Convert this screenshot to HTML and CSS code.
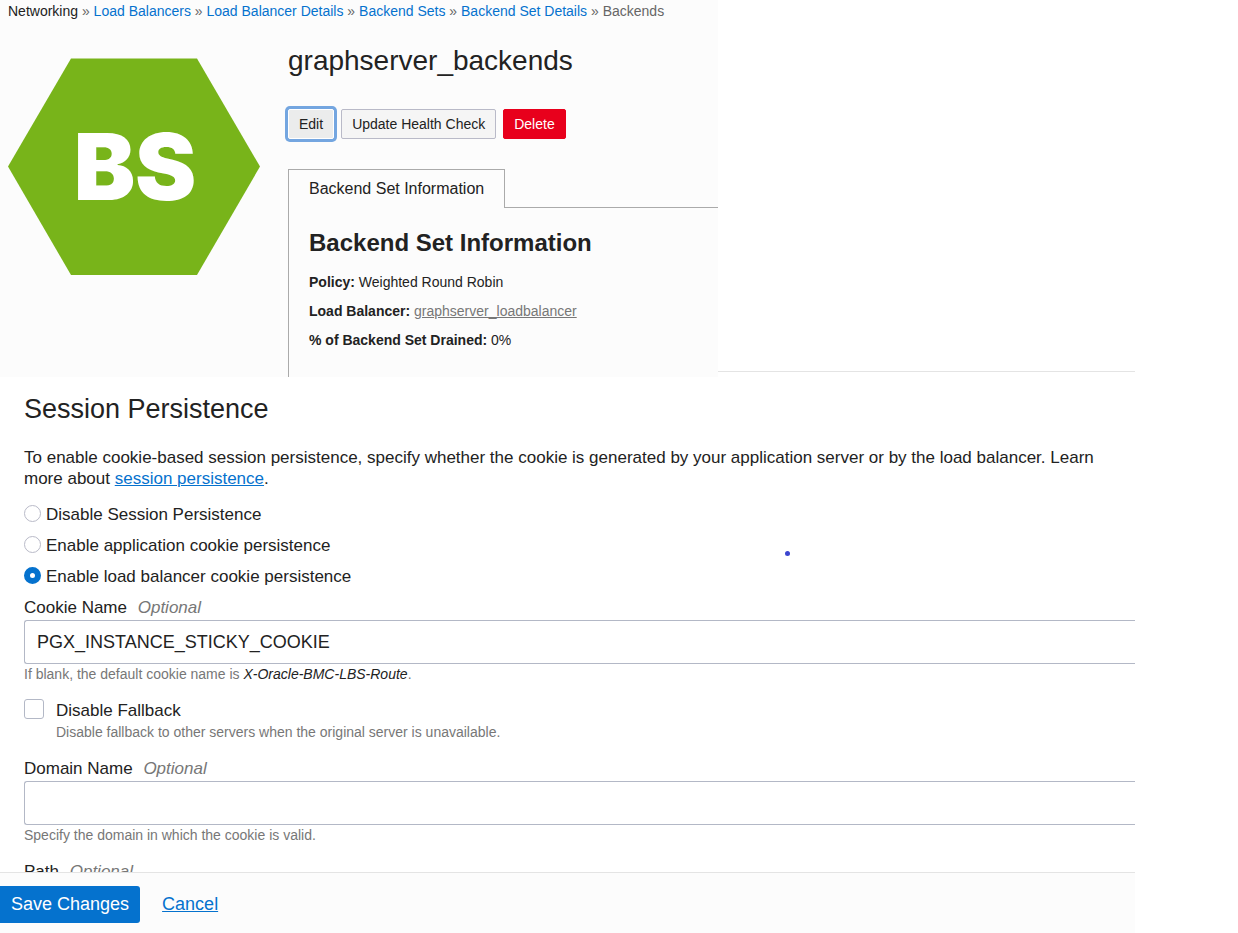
FILE: index.html
```
<!DOCTYPE html>
<html lang="en">
<head>
  <meta charset="utf-8">
  <title>Backend Set Details</title>
  <link rel="stylesheet" href="styles.css">
</head>
<body>
  <div class="page">
    <div class="top">
      <section class="details">
        <nav class="breadcrumb">
          <span class="current">Networking</span> »
          <a href="#">Load Balancers</a> »
          <a href="#">Load Balancer Details</a> »
          <a href="#">Backend Sets</a> »
          <a href="#">Backend Set Details</a> »
          Backends
        </nav>
        <div class="resource">
          <svg class="resource-icon" viewBox="0 0 252 217" width="252" height="217">
            <polygon points="0,108.5 63,0.5 189,0.5 252,108.5 189,217 63,217" fill="#78b41a"/>
            <text x="127" y="142" text-anchor="middle">BS</text>
          </svg>
          <div class="resource-body">
            <h1>graphserver_backends</h1>
            <div class="actions">
              <button type="button" class="btn btn-focus">Edit</button>
              <button type="button" class="btn">Update Health Check</button>
              <button type="button" class="btn btn-danger">Delete</button>
            </div>
            <div class="tabs">
              <button type="button" class="tab">Backend Set Information</button>
              <div class="tab-line"></div>
            </div>
            <div class="tab-panel">
              <h2>Backend Set Information</h2>
              <p><b>Policy:</b> Weighted Round Robin</p>
              <p><b>Load Balancer:</b> <a href="#">graphserver_loadbalancer</a></p>
              <p><b>% of Backend Set Drained:</b> 0%</p>
            </div>
          </div>
        </div>
      </section>
      <div class="divider"></div>
    </div>

    <form class="session">
      <div class="session-fields">
        <h1>Session Persistence</h1>
        <p class="intro">To enable cookie-based session persistence, specify whether the cookie is generated by your application server or by the load balancer. Learn more about <a href="#">session persistence</a>.</p>

        <div class="radio-row">
          <input type="radio" name="persistence" id="persist-off">
          <label for="persist-off">Disable Session Persistence</label>
        </div>
        <div class="radio-row">
          <input type="radio" name="persistence" id="persist-app">
          <label for="persist-app">Enable application cookie persistence</label>
        </div>
        <div class="radio-row">
          <input type="radio" name="persistence" id="persist-lb" checked>
          <label for="persist-lb">Enable load balancer cookie persistence</label>
        </div>

        <div class="field">
          <label for="cookie-name">Cookie Name <i>Optional</i></label>
          <input type="text" id="cookie-name" value="PGX_INSTANCE_STICKY_COOKIE">
          <p class="help">If blank, the default cookie name is <em>X-Oracle-BMC-LBS-Route</em>.</p>
        </div>

        <div class="check-row">
          <input type="checkbox" id="disable-fallback">
          <div>
            <label for="disable-fallback">Disable Fallback</label>
            <p class="help">Disable fallback to other servers when the original server is unavailable.</p>
          </div>
        </div>

        <div class="field">
          <label for="domain-name">Domain Name <i>Optional</i></label>
          <input type="text" id="domain-name">
          <p class="help">Specify the domain in which the cookie is valid.</p>
        </div>

        <div class="field">
          <label for="path">Path <i>Optional</i></label>
          <input type="text" id="path">
        </div>
        <span class="dot"></span>
      </div>

      <div class="session-footer">
        <button type="submit" class="save">Save Changes</button>
        <a href="#">Cancel</a>
      </div>
    </form>
  </div>
</body>
</html>
```
FILE: styles.css
```
* {
  box-sizing: border-box;
}

body {
  margin: 0;
  font-family: "Liberation Sans", Arial, sans-serif;
  font-size: 14px;
  color: #222;
  background-color: #fff;
}

h1, h2, p {
  margin: 0;
}

a {
  color: #0572ce;
}

button, input {
  font-family: inherit;
  margin: 0;
}

h1 {
  font-size: 28px;
  font-weight: normal;
  line-height: 32px;
}

.page {
  display: flex;
  flex-direction: column;
  height: 100vh;
  margin-right: 103px;
}

/* backend set details */

.top {
  display: flex;
  flex: none;
}

.details {
  width: 58vw;
  background-color: #fcfcfc;
}

.divider {
  flex: 1;
  margin-bottom: 5px;
  border-bottom: 1px solid #e4e4e4;
}

.breadcrumb {
  padding: 3px 8px;
  line-height: 16px;
  color: #666;
}

.breadcrumb a {
  text-decoration: none;
}

.breadcrumb .current {
  color: #222;
}

.resource {
  display: flex;
  gap: 28px;
  padding: 23px 0 0 8px;
}

.resource-icon {
  flex: none;
  margin-top: 13px;
}

.resource-icon text {
  font-family: Inter, sans-serif;
  font-size: 92px;
  font-weight: 900;
  fill: #fff;
}

.resource-body {
  flex: 1;
}

.actions {
  display: flex;
  margin: 32px 0 30px;
}

.btn {
  height: 30px;
  padding: 0 10px;
  margin-right: 7px;
  border: 1px solid #b9bac8;
  border-radius: 2px;
  background-color: #f5f5f5;
  font-size: 14px;
  color: #222;
}

.btn-focus {
  border-color: #fff;
  background-color: #ebecec;
  box-shadow: 0 0 0 3px #74a6e0;
}

.btn-danger {
  border-color: #e8001c;
  background-color: #e8001c;
  color: #fff;
}

.tabs {
  display: flex;
}

.tab {
  height: 39px;
  padding: 0 20px;
  border: 1px solid #aaa;
  border-bottom: none;
  background: none;
  font-size: 16px;
  color: #222;
}

.tab-line {
  flex: 1;
  border-bottom: 1px solid #aaa;
}

.tab-panel {
  padding: 20px 20px 22px;
  border-left: 1px solid #aaa;
}

.tab-panel h2 {
  margin-bottom: 10px;
  font-size: 24px;
  line-height: 30px;
}

.tab-panel p {
  line-height: 29px;
}

.tab-panel a {
  color: #777;
}

/* session persistence form */

.session {
  display: flex;
  flex: 1;
  flex-direction: column;
  min-height: 0;
}

.session-fields {
  position: relative;
  flex: 1;
  min-height: 0;
  overflow: hidden;
  padding: 16px 0 0 24px;
  font-size: 17px;
}

.session h1 {
  font-size: 27px;
}

.intro {
  margin: 22px 0 10px;
  padding-right: 32px;
  line-height: 21px;
}

.radio-row {
  display: flex;
  align-items: center;
  gap: 5px;
  height: 31px;
}

input[type="radio"] {
  appearance: none;
  width: 17px;
  height: 17px;
  margin-bottom: 2px;
  border: 1px solid #b9bac8;
  border-radius: 50%;
}

input[type="radio"]:checked {
  border: 6px solid #0572ce;
}

.field {
  padding-top: 6px;
  margin-bottom: 11px;
}

.field label {
  display: block;
  line-height: 20px;
  margin-bottom: 2px;
}

.field i {
  margin-left: 6px;
  color: #777;
}

input[type="text"] {
  display: block;
  width: 100%;
  height: 44px;
  padding: 0 12px;
  border: 1px solid #b3b8c6;
  border-right: none;
  border-radius: 3px 0 0 3px;
  font-size: 18px;
  color: #222;
}

.help {
  font-size: 14px;
  line-height: 20px;
  color: #777;
}

.help em {
  color: #222;
}

.check-row {
  display: flex;
  gap: 12px;
  padding-top: 4px;
  margin-bottom: 11px;
}

.check-row label {
  display: block;
  line-height: 23px;
}

input[type="checkbox"] {
  appearance: none;
  width: 20px;
  height: 20px;
  border: 1px solid #b3b8c6;
  border-radius: 3px;
}

.dot {
  position: absolute;
  left: 785px;
  top: 174px;
  width: 5px;
  height: 5px;
  border-radius: 50%;
  background-color: #3b45cf;
}

.session-footer {
  display: flex;
  align-items: center;
  gap: 22px;
  padding: 13px 0 10px;
  border-top: 1px solid #e4e4e4;
  background-color: #fcfcfc;
  font-size: 18px;
}

.save {
  height: 37px;
  padding: 0 11px;
  border: none;
  border-radius: 0 3px 3px 0;
  background-color: #0572ce;
  font-size: 18px;
  color: #fff;
}
```
